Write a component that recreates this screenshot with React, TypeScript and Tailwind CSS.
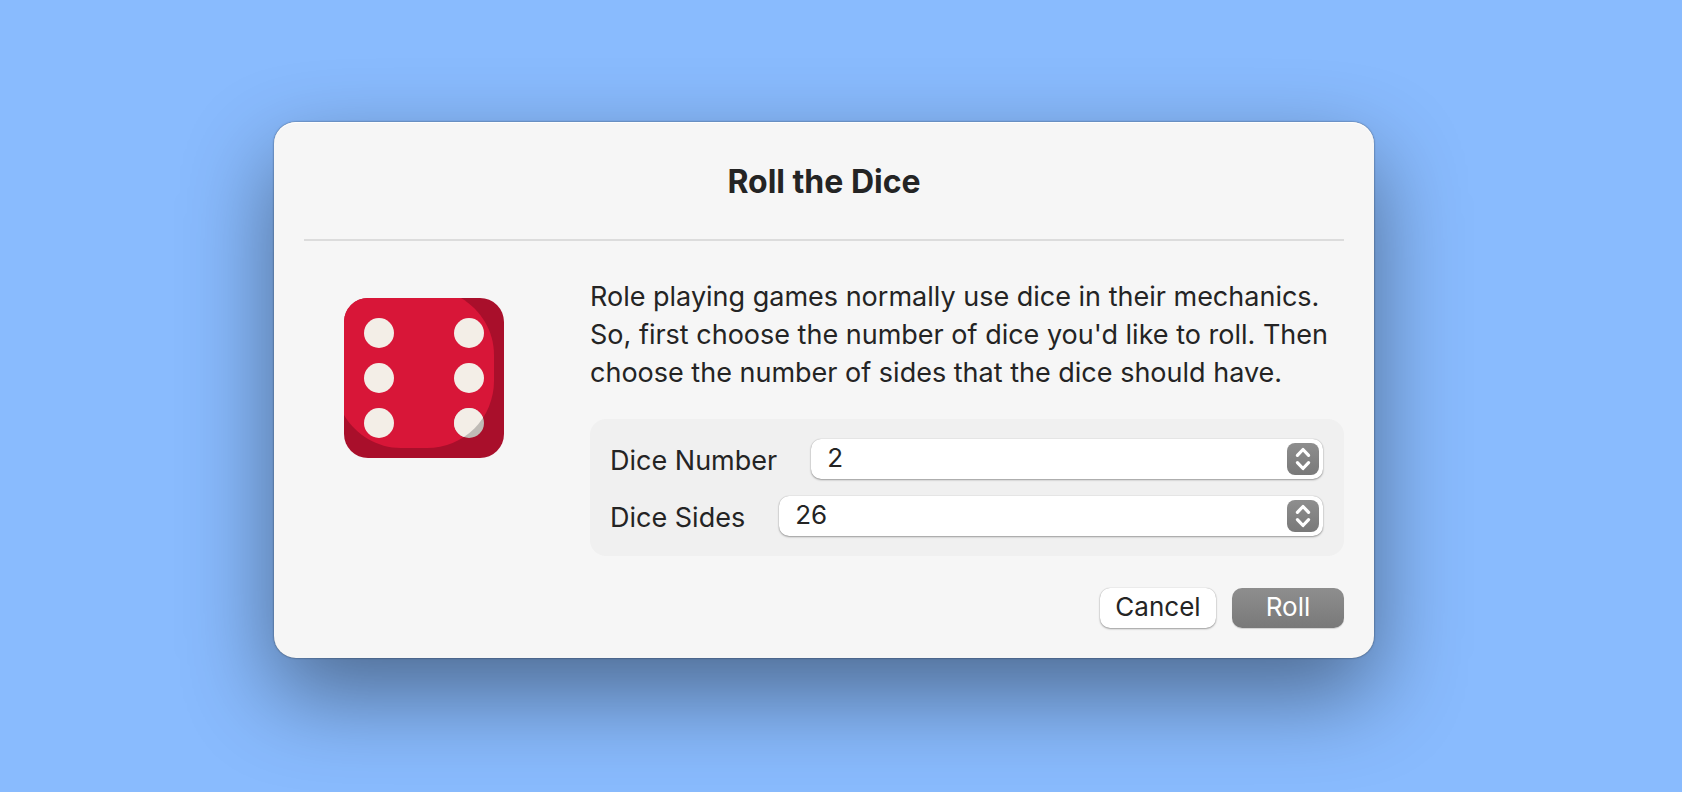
import { useState } from "react";

interface PopUpProps {
  id: string;
  label: string;
  value: number;
  options: number[];
  onChange: (value: number) => void;
}

const diceCounts = Array.from({ length: 10 }, (_, i) => i + 1);
const diceSides = Array.from({ length: 99 }, (_, i) => i + 2);

function PopUp({ id, label, value, options, onChange }: PopUpProps) {
  return (
    <div className="flex items-center gap-[34px]">
      <label htmlFor={id} className="pt-[3px] text-[27px] leading-[37px] whitespace-nowrap">
        {label}
      </label>
      <div className="relative flex-1">
        <select
          id={id}
          value={value}
          onChange={(e) => onChange(Number(e.target.value))}
          className="block h-10 w-full appearance-none rounded-[10px] bg-white pr-12 pb-0.5 pl-4 text-[26px] leading-9 shadow-[0_0_1px_rgba(0,0,0,0.3),0_1px_2px_rgba(0,0,0,0.35)] outline-none"
        >
          {options.map((n) => (
            <option key={n} value={n}>
              {n}
            </option>
          ))}
        </select>
        <span className="pointer-events-none absolute inset-y-1 right-1 w-8 rounded-lg bg-linear-to-b from-[#8e8e8e] to-[#797979]">
          <svg
            viewBox="0 0 32 32"
            className="size-8"
            fill="none"
            stroke="#fff"
            strokeWidth="3.2"
            strokeLinecap="round"
            strokeLinejoin="round"
          >
            <path d="M10.4 12.3 16 6.5 21.6 12.3" />
            <path d="M10.4 19.7 16 25.5 21.6 19.7" />
          </svg>
        </span>
      </div>
    </div>
  );
}

function Die() {
  return (
    <svg viewBox="0 0 160 160" className="size-40" role="img" aria-label="Six">
      <defs>
        <clipPath id="die-body">
          <rect width="160" height="160" rx="24" />
        </clipPath>
        <clipPath id="die-face">
          <path d="M0 0H117C137 12 150 33 150 57V83A67 67 0 0 1 83 150H57C33 150 12 137 0 117Z" />
        </clipPath>
      </defs>
      <g clipPath="url(#die-body)">
        <rect width="160" height="160" fill="#a90f2b" />
        <rect width="160" height="160" fill="#d81638" clipPath="url(#die-face)" />
      </g>
      <g fill="#f3eee7">
        <circle cx="35" cy="35" r="15" />
        <circle cx="35" cy="80" r="15" />
        <circle cx="35" cy="125" r="15" />
        <circle cx="125" cy="35" r="15" />
        <circle cx="125" cy="80" r="15" />
      </g>
      {/* the last pip runs under the shaded edge */}
      <circle cx="125" cy="125" r="15" fill="#bfbbb6" />
      <circle cx="125" cy="125" r="15" fill="#f3eee7" clipPath="url(#die-face)" />
    </svg>
  );
}

export default function App() {
  const [count, setCount] = useState(2);
  const [sides, setSides] = useState(26);

  return (
    <main className="flex min-h-screen items-start justify-center bg-[#89bbfe] pt-[122px] pr-[34px] pb-32 font-['Inter',sans-serif] text-[#242424]">
      <form
        onSubmit={(e) => e.preventDefault()}
        className="w-full max-w-[1100px] rounded-[22px] bg-[#f6f6f6] px-[30px] pb-[30px] shadow-[inset_0_1px_1px_#fff,0_0_2px_rgba(0,0,0,0.6),0_36px_90px_rgba(0,0,0,0.44)]"
      >
        <h1 className="border-b-2 border-[#dcdcdc] pt-10 pb-[37px] text-center text-[32px] leading-10 font-bold">
          Roll the Dice
        </h1>
        <div className="flex pt-9">
          <div className="px-10 pt-[21px]">
            <Die />
          </div>
          <div className="ml-[46px] flex-1">
            <p className="pt-px text-[27px] leading-[38px]">
              Role playing games normally use dice in their mechanics.
              <br />
              So, first choose the number of dice you'd like to roll. Then
              <br />
              choose the number of sides that the dice should have.
            </p>
            <div className="mt-[27px] flex flex-col gap-[17px] rounded-2xl bg-[#f0f0f0] py-5 pr-[21px] pl-5">
              <PopUp id="dice-number" label="Dice Number" value={count} options={diceCounts} onChange={setCount} />
              <PopUp id="dice-sides" label="Dice Sides" value={sides} options={diceSides} onChange={setSides} />
            </div>
            <div className="mt-8 flex justify-end gap-4 text-[26px] leading-9">
              <button
                type="button"
                className="h-10 w-[116px] rounded-[10px] bg-white pb-0.5 shadow-[0_0_1px_rgba(0,0,0,0.3),0_1px_2px_rgba(0,0,0,0.35)]"
              >
                Cancel
              </button>
              <button
                type="submit"
                className="h-10 w-28 rounded-[10px] bg-linear-to-b from-[#8e8e8e] to-[#797979] pb-0.5 text-white shadow-[0_1px_1px_rgba(0,0,0,0.15)]"
              >
                Roll
              </button>
            </div>
          </div>
        </div>
      </form>
    </main>
  );
}
